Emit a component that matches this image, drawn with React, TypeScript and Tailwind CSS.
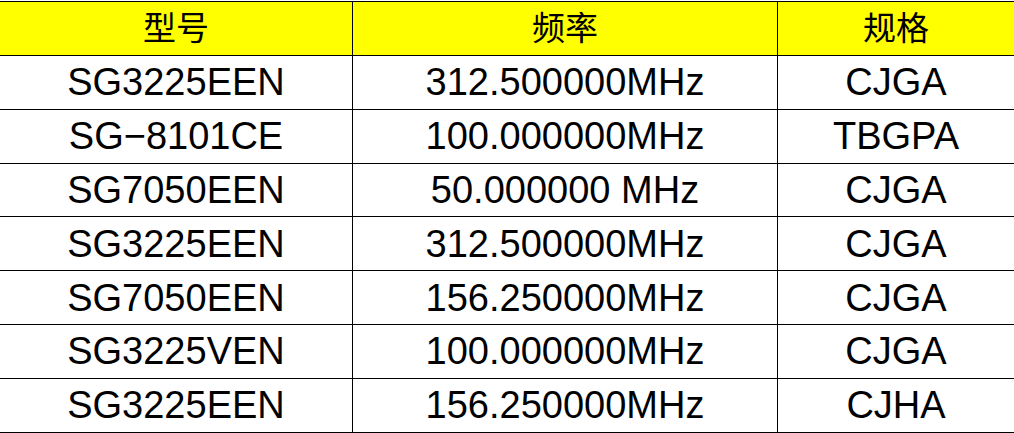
const rows = [
  { model: "SG3225EEN", freq: "312.500000MHz", spec: "CJGA" },
  { model: "SG\u22128101CE", freq: "100.000000MHz", spec: "TBGPA" },
  { model: "SG7050EEN", freq: "50.000000 MHz", spec: "CJGA" },
  { model: "SG3225EEN", freq: "312.500000MHz", spec: "CJGA" },
  { model: "SG7050EEN", freq: "156.250000MHz", spec: "CJGA" },
  { model: "SG3225VEN", freq: "100.000000MHz", spec: "CJGA" },
  { model: "SG3225EEN", freq: "156.250000MHz", spec: "CJHA" },
];

const App = () => {
  return (
    <div className="w-[1014px] h-[433px] bg-white overflow-hidden pt-[1px] font-['Liberation_Sans','Noto_Sans_CJK_SC',sans-serif] text-black">
      <div className="border-t border-black grid grid-cols-[353px_425px_1fr]">
        {/* Header */}
        {["型号", "频率", "规格"].map((h, i) => (
          <div
            key={h}
            className={`h-[54px] bg-[#ffff00] border-b border-black flex items-center justify-center text-[33px] leading-none ${
              i < 2 ? "border-r" : ""
            }`}
          >
            {h}
          </div>
        ))}

        {rows.map((r, idx) => (
          <div key={idx} className="contents">
            <div className="h-[53.8px] border-b border-r border-black flex items-center justify-center text-[38px] leading-none">
              {r.model}
            </div>
            <div className="h-[53.8px] border-b border-r border-black flex items-center justify-center text-[38px] leading-none">
              {r.freq}
            </div>
            <div className="h-[53.8px] border-b border-black flex items-center justify-center text-[38px] leading-none">
              {r.spec}
            </div>
          </div>
        ))}
      </div>
    </div>
  );
};

export default App;
